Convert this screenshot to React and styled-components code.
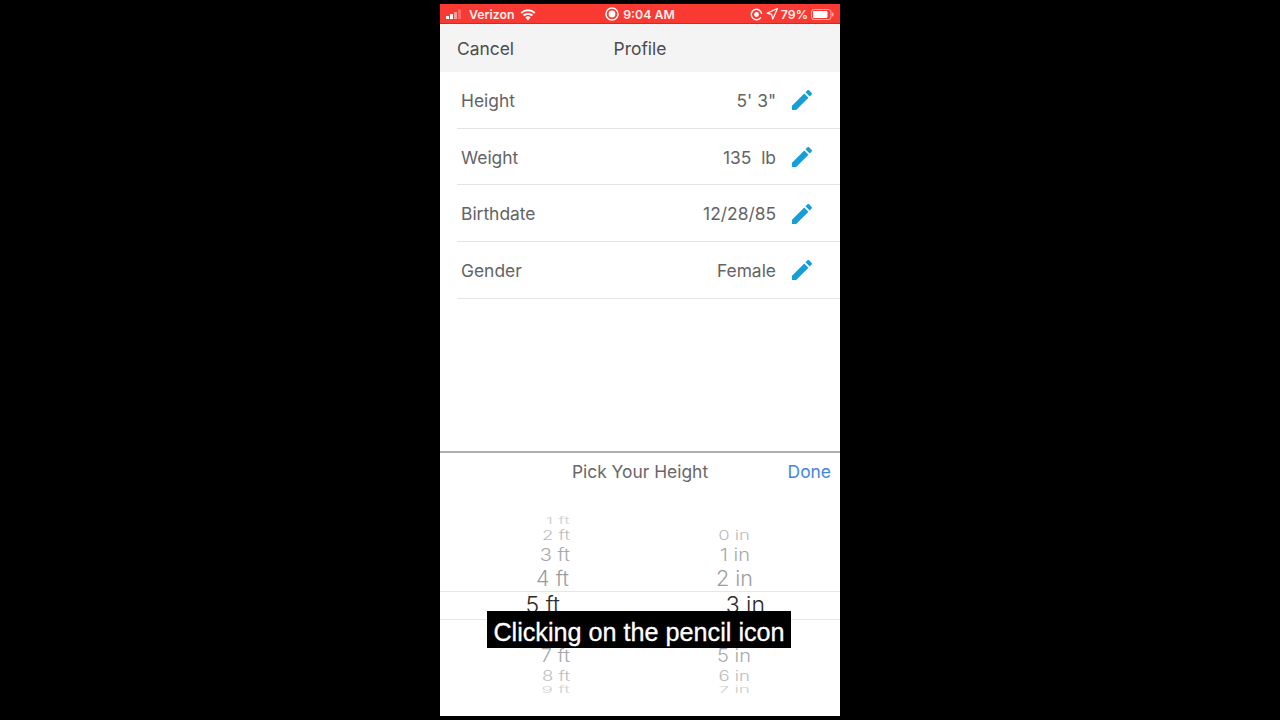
import React from 'react';
import styled, { createGlobalStyle } from 'styled-components';

const Global = createGlobalStyle`
  html, body { margin: 0; padding: 0; background: #000; height: 100%; overflow: hidden; }
  body { font-family: "Inter", "Liberation Sans", sans-serif; }
`;

const Stage = styled.div`
  width: 1280px;
  height: 720px;
  background: #000;
  display: flex;
  justify-content: center;
  padding-top: 4px;
  box-sizing: border-box;
`;
const Phone = styled.div`
  position: relative;
  width: 400px;
  height: 712px;
  background: #fff;
  display: flex;
  flex-direction: column;
  overflow: hidden;
`;
const StatusBar = styled.div`
  height: 20px;
  flex: none;
  background: #f93a32;
  border-bottom: 1px solid #e2231d;
  color: #fdeeee;
  display: grid;
  grid-template-columns: 1fr auto 1fr;
  align-items: center;
  font: 600 12.3px "Inter", "Liberation Sans", sans-serif;
  padding: 1px 6px 0;
  box-sizing: border-box;
`;
const StatusGroup = styled.div`
  display: flex;
  align-items: center;
  gap: ${p => p.$gap || 5}px;
  justify-content: ${p => p.$end ? 'flex-end' : 'flex-start'};
`;
const NavBar = styled.div`
  height: 48px;
  flex: none;
  background: #f4f4f5;
  position: relative;
  display: flex;
  align-items: center;
  justify-content: center;
  color: #4c4c4e;
  font-size: 17.4px;
  font-weight: 400;
`;
const Cancel = styled.span`
  position: absolute;
  left: 17px;
`;
const List = styled.div`
  flex: none;
  height: 380px;
  padding-left: 17px;
`;
const Row = styled.div`
  height: 56.7px;
  box-sizing: border-box;
  border-bottom: 1px solid #e4e4e6;
  display: flex;
  align-items: center;
  padding: 1px 28px 0 4px;
  color: #646466;
  font-size: 17.4px;
`;
const Value = styled.span`
  margin-left: auto;
  margin-right: 16px;
  white-space: pre;
`;
const PickerHeader = styled.div`
  height: 62px;
  flex: none;
  box-sizing: border-box;
  border-top: 2px solid #aeaeb0;
  padding-bottom: 23px;
  margin-top: -1px;
  margin-bottom: 1px;
  display: flex;
  align-items: center;
  justify-content: center;
  position: relative;
  color: #68686a;
  font-size: 17.4px;
`;
const Done = styled.span`
  position: absolute;
  right: 9px;
  color: #3f87e0;
`;
const Wheel = styled.div`
  display: flex;
  flex-direction: column;
  height: 180px;
`;
const WheelRow = styled.div`
  height: ${p => p.$h}px;
  flex: none;
  box-sizing: border-box;
  display: grid;
  grid-template-columns: 130px 195px;
  grid-template-rows: minmax(0, 1fr);
  align-items: center;
  overflow: hidden;
  border-top: ${p => p.$selected ? '1px solid #e6e6e8' : '0'};
  border-bottom: ${p => p.$selected ? '1px solid #e6e6e8' : '0'};
`;
const WheelCell = styled.span`
  display: block;
  text-align: right;
  white-space: nowrap;
  line-height: 1;
  font-family: "Inter", "Liberation Sans", sans-serif;
  font-weight: 300;
  font-size: ${p => p.$size}px;
  color: ${p => p.$color};
  padding-right: ${p => p.$inset}px;
  transform: scaleY(${p => p.$squash});
`;
const Caption = styled.div`
  position: absolute;
  left: 47px;
  top: 607px;
  width: 304px;
  height: 37px;
  padding-top: 6px;
  box-sizing: border-box;
  background: #000;
  color: #fff;
  display: flex;
  align-items: center;
  justify-content: center;
  font: 25.2px/1 "Liberation Sans", Arial, sans-serif;
  -webkit-text-stroke: 0.3px #fff;
  white-space: nowrap;
`;
const PencilSvg = styled.svg`
  width: 20px;
  height: 20px;
  flex: none;
  fill: #159fd9;
`;

const Pencil = () => (
  <PencilSvg viewBox="3 3 18 18" aria-hidden="true">
    <path d="M3 17.25V21h3.75L17.81 9.94l-3.75-3.75L3 17.25zM20.71 7.04c.39-.39.39-1.02 0-1.41l-2.34-2.34c-.39-.39-1.02-.39-1.41 0l-1.83 1.83 3.75 3.75 1.83-1.83z" />
  </PencilSvg>
);

const Signal = () => (
  <svg width="17" height="10" viewBox="0 0 17 10" style={{ marginRight: 1 }} aria-hidden="true">
    <rect x="0" y="7" width="3" height="3" rx=".6" fill="#fff" />
    <rect x="4" y="5" width="3" height="5" rx=".6" fill="#fff" />
    <rect x="8" y="3" width="3" height="7" rx=".6" fill="#fff" fillOpacity=".5" />
    <rect x="12" y="0.5" width="3" height="9.5" rx=".6" fill="#fff" fillOpacity=".25" />
  </svg>
);
const Wifi = () => (
  <svg width="18" height="13" viewBox="0 0 18 13" aria-hidden="true">
    <path d="M9 12.5 6.4 9.4a4 4 0 0 1 5.2 0z" fill="#fff" />
    <path d="M4.6 7.6a6.8 6.8 0 0 1 8.8 0M2.2 4.9a10.4 10.4 0 0 1 13.6 0" stroke="#fff" strokeWidth="2" fill="none" />
  </svg>
);
const Record = () => (
  <svg width="14" height="14" viewBox="0 0 14 14" aria-hidden="true">
    <circle cx="7" cy="7" r="6" stroke="#fff" strokeWidth="1.5" fill="none" />
    <circle cx="7" cy="7" r="3.4" fill="#fff" />
  </svg>
);
const Lock = () => (
  <svg width="13" height="13" viewBox="0 0 13 13" aria-hidden="true">
    <path d="M10.9 9.3A5.2 5.2 0 1 1 11.7 6" stroke="#fff" strokeWidth="1.4" fill="none" />
    <circle cx="6.5" cy="6.5" r="2.4" fill="#fff" />
  </svg>
);
const Arrow = () => (
  <svg width="12" height="12" viewBox="0 0 12 12" aria-hidden="true">
    <path d="M11.5.5 1 5.2l4.6 1.2L6.8 11z" stroke="#fff" strokeWidth="1.2" strokeLinejoin="round" fill="none" />
  </svg>
);
const Battery = () => (
  <svg width="23" height="11" viewBox="0 0 23 11" aria-hidden="true">
    <rect x=".5" y=".5" width="19.5" height="10" rx="2.5" stroke="#fff" strokeOpacity=".6" fill="none" />
    <rect x="2" y="2" width="14.5" height="7" rx="1.2" fill="#fff" />
    <rect x="21" y="3.5" width="1.5" height="4" rx=".7" fill="#fff" fillOpacity=".6" />
  </svg>
);

const profile = [
  ['Height', `5' 3"`],
  ['Weight', '135  lb'],
  ['Birthdate', '12/28/85'],
  ['Gender', 'Female'],
];

const wheel = [
  { h: 13, ft: '1 ft', inch: '', size: 19, color: '#cfcfd1', squash: 0.5, ftIn: 0, inIn: 15 },
  { h: 17, ft: '2 ft', inch: '0 in', size: 18.5, color: '#bcbcbe', squash: 0.72, ftIn: 0, inIn: 15 },
  { h: 22, ft: '3 ft', inch: '1 in', size: 20, color: '#a8a8aa', squash: 0.87, ftIn: 0, inIn: 15 },
  { h: 25, ft: '4 ft', inch: '2 in', size: 21.5, color: '#9c9c9e', squash: 0.97, ftIn: 1, inIn: 12 },
  { h: 29, ft: '5 ft', inch: '3 in', size: 23, color: '#2b2b2d', squash: 1, ftIn: 10, inIn: 0, selected: true },
  { h: 24, ft: '', inch: '', size: 21.5, color: '#9c9c9e', squash: 1, ftIn: 0, inIn: 13 },
  { h: 23, ft: '7 ft', inch: '5 in', size: 20, color: '#a8a8aa', squash: 0.9, ftIn: 0, inIn: 14 },
  { h: 18, ft: '8 ft', inch: '6 in', size: 18.5, color: '#bcbcbe', squash: 0.75, ftIn: 0, inIn: 15 },
  { h: 9, ft: '9 ft', inch: '7 in', size: 19, color: '#cfcfd1', squash: 0.5, ftIn: 0, inIn: 15 },
];

export default function App() {
  return (
    <>
      <Global />
      <Stage>
        <Phone>
          <StatusBar>
            <StatusGroup>
              <Signal />
              <span>Verizon</span>
              <Wifi />
            </StatusGroup>
            <StatusGroup $gap={4}>
              <Record />
              <span>9:04 AM</span>
            </StatusGroup>
            <StatusGroup $end $gap={3}>
              <Lock />
              <Arrow />
              <span>79%</span>
              <Battery />
            </StatusGroup>
          </StatusBar>
          <NavBar>
            <Cancel>Cancel</Cancel>
            Profile
          </NavBar>
          <List>
            {profile.map(([label, value]) => (
              <Row key={label}>
                {label}
                <Value>{value}</Value>
                <Pencil />
              </Row>
            ))}
          </List>
          <PickerHeader>
            Pick Your Height
            <Done>Done</Done>
          </PickerHeader>
          <Wheel>
            {wheel.map((r, i) => (
              <WheelRow key={i} $h={r.h} $selected={r.selected}>
                <WheelCell $size={r.size} $color={r.color} $squash={r.squash} $inset={r.ftIn}>{r.ft}</WheelCell>
                <WheelCell $size={r.size} $color={r.color} $squash={r.squash} $inset={r.inIn}>{r.inch}</WheelCell>
              </WheelRow>
            ))}
          </Wheel>
          <Caption>Clicking on the pencil icon</Caption>
        </Phone>
      </Stage>
    </>
  );
}
